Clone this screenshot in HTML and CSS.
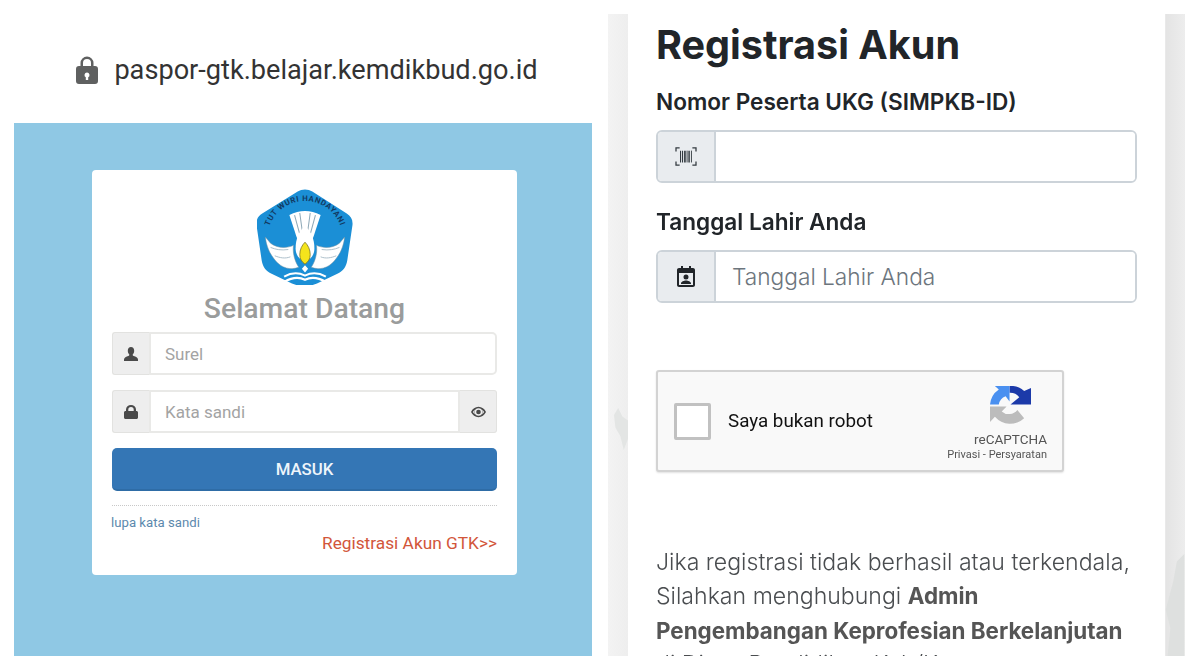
FILE: index.html
```html
<!DOCTYPE html>
<html lang="id">
<head>
<meta charset="utf-8">
<title>Paspor GTK</title>
<link rel="stylesheet" href="styles.css">
</head>
<body>
<main class="page">
  <section class="phone">
    <header class="urlbar">
      <svg class="url-lock" viewBox="0 0 22 28"><path fill="#5f6060" fill-rule="evenodd" d="M3 10h1.500V7a6.500 6.500 0 0 1 13 0v3H19a3 3 0 0 1 3 3v12a3 3 0 0 1-3 3H3a3 3 0 0 1-3-3V13a3 3 0 0 1 3-3zm4-3v3h8V7a4 4 0 0 0-8 0zm4 9.500a2.500 2.500 0 0 0-1.200 4.700V24h2.400v-2.800A2.500 2.500 0 0 0 11 16.500z"/></svg>
      <span class="url-text">paspor-gtk.belajar.kemdikbud.go.id</span>
    </header>
    <div class="login-bg">
      <div class="card">
        <svg class="logo" viewBox="2 1 92 92">
          <path fill="#1b8fd6" d="M41 3.500c4-2.800 10-2.800 14 0l33 21c4 2.500 6 6 5.500 11l-5 34c-1 6-4 10-9 12.500l-20 9.500c-8 3.500-16 3.500-24 0l-20-9.500c-5-2.500-8-6.500-9-12.500l-5-34c-.5-5 1.500-8.500 5.500-11z"/>
          <defs><path id="arc" d="M13 40A36 36 0 0 1 83 40"/></defs>
          <text class="logo-arc"><textPath href="#arc" startOffset="50%" text-anchor="middle">TUT WURI HANDAYANI</textPath></text>
          <path fill="#fff" d="M33 26c5-3 10-4 15-4s10 1 15 4l-5 15c-2 7-4 11-6 14h-8c-2-3-4-7-6-14z"/>
          <path fill="none" stroke="#8fa9b8" stroke-width="1" d="M38 26l6 22M43 24l3 22M53 24l-3 22M58 26l-6 22"/>
          <path fill="#fff" stroke="#6c8ea3" stroke-width=".5" d="M10 47c1 9 4 16 10 23 6 7 14 9 22 6-4-6-6-14-5-21-7 3-15 3-22-2z"/>
          <path fill="#fff" stroke="#6c8ea3" stroke-width=".5" d="M86 47c-1 9-4 16-10 23-6 7-14 9-22 6 4-6 6-14 5-21 7 3 15 3 22-2z"/>
          <path fill="none" stroke="#9db3c0" stroke-width=".8" d="M15 57c5 2 10 3 17 2M19 65c5 2 10 3 15 1M78 65c-5 2-10 3-15 1M81 57c-5 2-10 3-17 2"/>
          <path fill="#fff" d="M48 36c6 6 9 13 9 22 0 6-3 10-9 13-6-3-9-7-9-13 0-9 3-16 9-22z"/>
          <path fill="#f4e41c" stroke="#6f6a20" stroke-width=".7" d="M48 52c3 3 5 7 5 12 0 4-2 7-5 9-3-2-5-5-5-9 0-5 2-9 5-12z"/>
          <path fill="#fff" d="M48 74l3 3.500-3 3.500-3-3.500z"/>
          <path fill="none" stroke="#fff" stroke-width="2" d="M28 90c7-4 14-5 20-2 6-3 13-2 20 2M28 85c7-4 14-4 20-1 6-3 13-3 20 1"/>
        </svg>
        <h2 class="welcome">Selamat Datang</h2>
        <div class="lg-group">
          <span class="lg-addon lg-left">
            <svg class="lg-icon" viewBox="0 0 14 14"><path fill="#4a4a4a" d="M7 0c2 0 3.200 1.500 3.200 3.700 0 1.600-.7 3-1.500 3.800 0 .8.200 1.200 1 1.600 2 .8 4.300 1.500 4.300 3.300V14H0v-1.600c0-1.800 2.300-2.500 4.300-3.300.8-.4 1-.8 1-1.600-.8-.8-1.500-2.200-1.500-3.800C3.800 1.500 5 0 7 0z"/></svg>
          </span>
          <span class="lg-input">Surel</span>
        </div>
        <div class="lg-group">
          <span class="lg-addon lg-left">
            <svg class="lg-icon" viewBox="0 0 14 14"><path fill="#4a4a4a" fill-rule="evenodd" d="M2 6V4.500a5 4.500 0 0 1 10 0V6h.5c.8 0 1.500.7 1.500 1.500v5c0 .8-.7 1.500-1.500 1.500h-11C.7 14 0 13.300 0 12.500v-5C0 6.700.7 6 1.500 6zm2.300 0h5.400V4.500a2.700 2.500 0 0 0-5.400 0z"/></svg>
          </span>
          <span class="lg-input lg-mid">Kata sandi</span>
          <span class="lg-addon lg-right">
            <svg class="lg-eye" viewBox="0 0 16 12"><path fill="#4a4a4a" fill-rule="evenodd" d="M8 .5c3.500 0 6.500 2.300 8 5.500-1.500 3.200-4.500 5.500-8 5.500S1.500 9.200 0 6C1.500 2.800 4.500.5 8 .5zM8 2a4 4 0 1 0 0 8 4 4 0 0 0 0-8zM8 3.500a2.500 2.500 0 1 1 0 5 2.500 2.500 0 0 1 0-5zM2 6c.6.900 1.300 1.700 2.200 2.300A5 5 0 0 1 4.200 3.700C3.300 4.300 2.600 5.100 2 6zM14 6c-.6-.900-1.300-1.700-2.200-2.300a5 5 0 0 1 0 4.600C12.700 7.700 13.400 6.900 14 6z"/></svg>
          </span>
        </div>
        <div class="btn-masuk">MASUK</div>
        <div class="links">
          <a class="forgot">lupa kata sandi</a>
          <a class="register">Registrasi Akun GTK&gt;&gt;</a>
        </div>
      </div>
    </div>
  </section>

  <section class="phone phone-reg">
    <svg class="map map-left" viewBox="0 0 20 60"><path fill="#e3e5e4" d="M6 0l6 12 8 6v26L14 60 9 40 2 28 0 10z"/></svg>
    <svg class="map map-right" viewBox="0 0 20 110"><path fill="#dee0df" d="M20 0v110H2l3-30-5-20 8-30 4-22z"/></svg>
    <div class="reg-col">
      <h1 class="reg-title">Registrasi Akun</h1>
      <label class="reg-label reg-label-first">Nomor Peserta UKG (SIMPKB-ID)</label>
      <div class="reg-group">
        <span class="reg-addon">
          <svg class="reg-icon reg-icon-wide" viewBox="0 0 26 22" fill="none" stroke="#333a40"><path stroke-width="1.400" d="M6 1H2v4M20 1h4v4M2 16v4h4M24 16v4h-4"/><path stroke-width="1.200" d="M7 4v13M9.200 4v13"/><path stroke-width="1.800" d="M11.800 4v13"/><path stroke-width="1" d="M14.200 4v13"/><path stroke-width="1.600" d="M16.400 4v13"/><path stroke-width="1" d="M19 4v13"/></svg>
        </span>
        <span class="reg-input"></span>
      </div>
      <label class="reg-label">Tanggal Lahir Anda</label>
      <div class="reg-group">
        <span class="reg-addon">
          <svg class="reg-icon" viewBox="0 0 24 24"><path fill="#212529" fill-rule="evenodd" d="M7 1h2v2h6V1h2v2h2c1.100 0 2 .9 2 2v15c0 1.100-.9 2-2 2H5c-1.100 0-2-.9-2-2V5c0-1.100.9-2 2-2h2zM5 8v12h14V8zm7 1.500a2.500 2.500 0 1 1 0 5 2.500 2.500 0 0 1 0-5zM7 18.500c0-2 3-3 5-3s5 1 5 3v.5H7z"/></svg>
        </span>
        <span class="reg-input reg-placeholder">Tanggal Lahir Anda</span>
      </div>
      <div class="captcha">
        <span class="cap-box"></span>
        <span class="cap-text">Saya bukan robot</span>
        <div class="cap-brand">
          <svg class="cap-logo" viewBox="0 0 42 42">
            <path fill="#1c3aa9" d="M20 0A20 20 0 0 1 35 5l7-3v17H21l9-7.500A12 12 0 0 0 20 7z"/>
            <path fill="#4a90f0" d="M0 19A21 21 0 0 1 9 3.500L5 0h15v16l-4-5.500A11 11 0 0 0 9 19z"/>
            <path fill="#bcbcbc" d="M0 21h17l-5 5a11 11 0 0 0 16-1.500l7 8.500A21 21 0 0 1 5 31.500L0 37z"/>
          </svg>
          <span class="cap-name">reCAPTCHA</span>
          <span class="cap-links">Privasi - Persyaratan</span>
        </div>
      </div>
      <p class="reg-note">Jika registrasi tidak berhasil atau terkendala, Silahkan menghubungi <b>Admin Pengembangan Keprofesian Berkelanjutan</b> di Dinas Pendidikan Kab/Kota setempat atau</p>
    </div>
  </section>
</main>
</body>
</html>
```

FILE: styles.css
```css
* { box-sizing: border-box; }
html, body { margin: 0; height: 100%; background: #fff; }
body { overflow: hidden; }
.page {
  display: flex;
  gap: 16px;
  height: 671px;
  padding: 14px 15px 15px 14px;
  filter: blur(.35px);
}
.phone {
  flex: 0 0 578px;
  display: flex;
  flex-direction: column;
  overflow: hidden;
}
.urlbar {
  flex: 0 0 109px;
  display: flex;
  align-items: center;
  justify-content: center;
  gap: 16px;
  padding: 3px 0 0 8px;
  background: #fff;
}
.url-lock { width: 22px; height: 28px; }
.url-text {
  font: 400 27.150px "Roboto", sans-serif;
  color: #333;
  white-space: nowrap;
}
.login-bg {
  flex: 1;
  background: #8fc8e4;
  display: flex;
  justify-content: center;
  align-items: flex-start;
  padding: 47px 0 0 3px;
}
.card {
  width: 425px;
  height: 405px;
  background: #fff;
  border-radius: 4px;
  padding: 19px 20px 0;
  display: flex;
  flex-direction: column;
}
.logo { width: 96px; height: 96px; align-self: center; flex: none; }
.logo-arc { font: 700 7.500px "Roboto", sans-serif; fill: #123a63; letter-spacing: .6px; }
.welcome {
  margin: 6px 0 5px;
  text-align: center;
  font: 500 28.300px/36px "Roboto", sans-serif;
  color: #9a9c9c;
}
.lg-group {
  display: flex;
  height: 43px;
  margin-bottom: 15px;
}
.lg-addon {
  display: flex;
  align-items: center;
  justify-content: center;
  flex: 0 0 37px;
  background: #eeeeee;
  border: 1px solid #e2e2e0;
}
.lg-left { border-radius: 3px 0 0 3px; border-right: 0; }
.lg-right { border-radius: 0 3px 3px 0; border-left: 0; }
.lg-icon { width: 14px; height: 14px; }
.lg-eye { width: 15px; height: 12px; }
.lg-input {
  flex: 1;
  display: flex;
  align-items: center;
  padding-left: 14px;
  background: #fff;
  border: 2px solid #e9e9e7;
  border-radius: 0 5px 5px 0;
  font: 400 17px "Roboto", sans-serif;
  color: #a3a3a3;
}
.lg-mid { border-radius: 0; }
.btn-masuk {
  height: 43px;
  display: flex;
  align-items: center;
  justify-content: center;
  background: #3476b5;
  border-bottom: 2px solid #2e6ca6;
  border-radius: 5px;
  color: #eef5fb;
  font: 500 16.800px "Roboto", sans-serif;
}
.links {
  margin-top: 14px;
  border-top: 1px dotted #c8c8c8;
  display: flex;
  flex-direction: column;
}
.forgot {
  font: 400 13.200px/18px "Roboto", sans-serif;
  color: #5c89ad;
  margin: 8px 0 0 -1px;
}
.register {
  align-self: flex-end;
  font: 400 17.300px/20px "Roboto", sans-serif;
  color: #d2563a;
  margin-top: 1px;
}

.phone-reg {
  flex: 0 0 577px;
  position: relative;
  padding: 0 20px;
  background: linear-gradient(90deg, #f3f3f3 0, #eeeeee 20px, #eeeeee 557px, #e4e4e4 558px, #ededed 100%);
}
.map { position: absolute; }
.map-left { left: 6px; top: 390px; width: 14px; height: 50px; }
.map-right { right: 0; top: 540px; width: 20px; height: 102px; }
.reg-col {
  position: relative;
  flex: 1;
  background: #fff;
  padding: 6px 28px 0 28px;
}
.reg-title {
  margin: 0;
  font: 700 39.600px/50px "Inter", sans-serif;
  color: #212529;
}
.reg-label {
  display: block;
  font: 600 22.600px/28px "Inter", sans-serif;
  color: #212529;
  margin-top: 25px;
}
.reg-label-first { margin-top: 18px; }
.reg-group {
  display: flex;
  height: 53px;
  margin-top: 14px;
  border: 2px solid #ccd3d9;
  border-radius: 6px;
  overflow: hidden;
}
.reg-addon {
  flex: 0 0 58px;
  display: flex;
  align-items: center;
  justify-content: center;
  background: #e9ecef;
  border-right: 2px solid #ccd3d9;
}
.reg-icon { width: 24px; height: 24px; }
.reg-icon-wide { height: 20px; }
.reg-input {
  flex: 1;
  display: flex;
  align-items: center;
  padding-left: 16px;
  background: #fff;
}
.reg-placeholder {
  font: 300 22.700px "Inter", sans-serif;
  color: #6c757d;
}
.captcha {
  width: 408px;
  height: 102px;
  margin-top: 67px;
  display: flex;
  align-items: center;
  background: #f9f9f9;
  border: 2px solid #d3d3d3;
  border-radius: 3px;
  box-shadow: 0 1px 2px rgba(0,0,0,.12);
  padding: 0 15px 0 16px;
}
.cap-box {
  width: 37px;
  height: 37px;
  background: #fff;
  border: 3px solid #c1c1c1;
  border-radius: 2px;
}
.cap-text {
  margin-left: 17px;
  font: 400 18.800px "Roboto", sans-serif;
  color: #111;
}
.cap-brand {
  margin-left: auto;
  align-self: flex-start;
  display: flex;
  flex-direction: column;
  align-items: flex-end;
  padding-top: 14px;
}
.cap-logo { width: 41px; height: 41px; margin-right: 16px; }
.cap-name {
  font: 400 13.500px/16px "Roboto", sans-serif;
  color: #555;
  margin-top: 4px;
}
.cap-links {
  font: 400 11px/14px "Roboto", sans-serif;
  color: #555;
  white-space: nowrap;
  margin-top: 1px;
}
.reg-note {
  margin: 74px 0 0;
  font: 300 23.100px/33.300px "Inter", sans-serif;
  color: #4a4d50;
}
.reg-note b { font-weight: 700; font-size: 22.400px; color: #555; }
```
